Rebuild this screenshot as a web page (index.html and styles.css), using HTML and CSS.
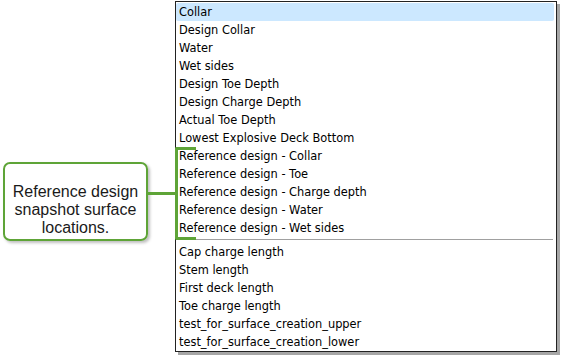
FILE: index.html
```html
<!DOCTYPE html>
<html>
<head>
<meta charset="utf-8">
<link rel="stylesheet" href="styles.css">
</head>
<body>
<div class="page">
  <div class="annot">
    <div class="callout">Reference design<br>snapshot surface<br>locations.</div>
    <div class="connector"></div>
  </div>
  <div class="listbox">
    <div class="item selected">Collar</div>
    <div class="item">Design Collar</div>
    <div class="item">Water</div>
    <div class="item">Wet sides</div>
    <div class="item">Design Toe Depth</div>
    <div class="item">Design Charge Depth</div>
    <div class="item">Actual Toe Depth</div>
    <div class="item">Lowest Explosive Deck Bottom</div>
    <div class="group">
      <div class="bracket"></div>
      <div class="item">Reference design - Collar</div>
      <div class="item">Reference design - Toe</div>
      <div class="item">Reference design - Charge depth</div>
      <div class="item">Reference design - Water</div>
      <div class="item">Reference design - Wet sides</div>
    </div>
    <div class="sep"></div>
    <div class="item">Cap charge length</div>
    <div class="item">Stem length</div>
    <div class="item">First deck length</div>
    <div class="item">Toe charge length</div>
    <div class="item">test_for_surface_creation_upper</div>
    <div class="item">test_for_surface_creation_lower</div>
  </div>
</div>
</body>
</html>
```
FILE: styles.css
```css
html, body {
  margin: 0;
  padding: 0;
  background: #fff;
}
.page {
  display: flex;
  align-items: flex-start;
  width: 563px;
  height: 358px;
}
.annot {
  width: 175px;
  display: flex;
  align-items: center;
  margin-top: 162px;
}
.callout {
  box-sizing: border-box;
  width: 145px;
  height: 79px;
  margin-left: 3px;
  border: 2px solid #5ea437;
  border-radius: 7px;
  box-shadow: 2px 2px 3px rgba(0,0,0,0.25);
  font-family: "Liberation Sans", Arial, sans-serif;
  font-size: 16px;
  line-height: 18px;
  color: #1a1a1a;
  text-align: center;
  padding-top: 19px;
  white-space: nowrap;
}
.connector {
  flex: 1;
  height: 3px;
  margin-top: -17px;
  background: #5ea437;
}
.listbox {
  box-sizing: border-box;
  margin-top: 1px;
  width: 382px;
  height: 351px;
  border: 1px solid #222;
  box-shadow: 3px 3px 0 rgba(0,0,0,0.35);
  padding: 1px 2px 0 0;
  font-family: "DejaVu Sans", Tahoma, sans-serif;
  font-size: 11.4px;
  color: #000;
}
.item {
  height: 18px;
  line-height: 18px;
  padding-left: 3px;
  white-space: nowrap;
}
.item.selected {
  background: #cce8ff;
  border-radius: 2px;
}
.group {
  position: relative;
}
.bracket {
  position: absolute;
  left: -1px;
  top: 0;
  width: 18px;
  height: 87px;
  border: 3px solid #5ea437;
  border-right: none;
  border-radius: 2px 0 0 2px;
  pointer-events: none;
}
.sep {
  height: 1px;
  background: #a0a0a0;
  margin: 2px 1px 3px 0;
}
```
